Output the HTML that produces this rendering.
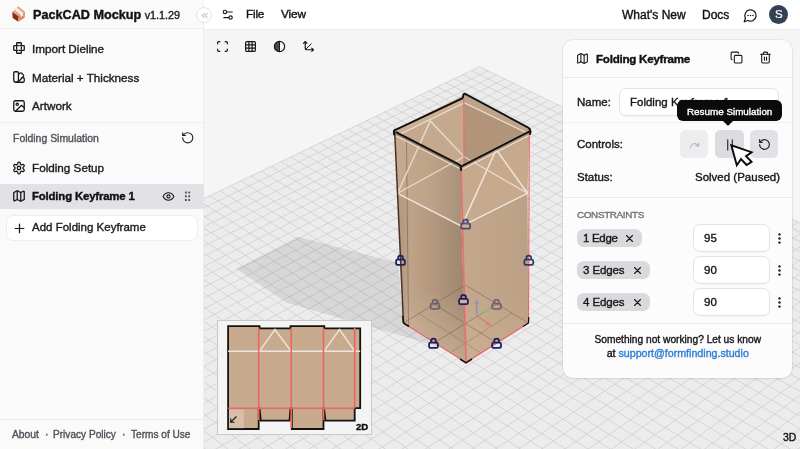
<!DOCTYPE html>
<html lang="en">
<head>
<meta charset="utf-8">
<title>PackCAD Mockup</title>
<style>
*{box-sizing:border-box;margin:0;padding:0}
html,body{width:800px;height:449px;overflow:hidden;background:#fff}
body{font-family:"Liberation Sans",Arial,sans-serif;color:#18181b;position:relative;-webkit-font-smoothing:antialiased}
.abs{position:absolute}
.scene{position:absolute;left:0;top:0}
.t{position:absolute;white-space:nowrap;line-height:1;will-change:transform;-webkit-text-stroke:0.38px currentColor}
svg{display:block;overflow:visible}
.ico{position:absolute;fill:none;stroke:#18181b;stroke-width:2;stroke-linecap:round;stroke-linejoin:round}
/* top bar */
#topbar{left:204px;top:0;width:596px;height:29.9px;background:#fff;border-bottom:1.9px solid #ebebed}
/* sidebar */
#side{left:0;top:0;width:204px;height:449px;background:#fafafa;border-right:1px solid #eeeef0}
#side .sep{position:absolute;left:0;width:203px;height:1px;background:#e7e7ea}
#sel{left:0;top:183.5px;width:204px;height:25px;background:#e2e2e6}
#addbtn{left:5.5px;top:214.7px;width:192px;height:26.8px;background:#fff;border:1px solid #ededf0;border-radius:7px}
.nav{font-size:11.7px;color:#1c1c1f}
/* panel */
#panel{left:563px;top:39.5px;width:228.5px;height:338.3px;background:#fcfcfc;border-radius:10px;box-shadow:0 0 0 1px rgba(0,0,0,.05),0 1px 3px rgba(0,0,0,.06)}
#panel .sep{position:absolute;left:0;width:228.5px;height:1px;background:#e9e9ec}
.inp{position:absolute;background:#fff;border:1px solid #e4e4e7;border-radius:7px;box-shadow:0 1px 1px rgba(0,0,0,.03)}
.cbtn{position:absolute;width:28.3px;height:28.3px;border-radius:5.5px;background:#e2e2e6}
.chip{position:absolute;height:18.2px;border-radius:6.5px;background:#dadade}
.p{font-size:11.5px;color:#18181b}
</style>
</head>
<body>
<svg class="scene" width="800" height="449" viewBox="0 0 800 449">
<defs><clipPath id="vp"><rect x="204" y="28" width="596" height="421"/></clipPath></defs>
<g clip-path="url(#vp)">
<rect x="204" y="28" width="596" height="421" fill="#f5f5f5"/>
<polygon points="489.2,731.4 1003.6,322.3 479.6,66.6 -33.0,311.9" fill="#ececed"/>
<path d="M489.2,731.4L-33.0,311.9M502.7,720.7L-20.3,305.8M516.0,710.1L-7.8,299.8M529.2,699.6L4.7,293.9M542.2,689.2L17.0,288.0M555.0,679.0L29.2,282.2M567.7,668.9L41.2,276.4M580.3,659.0L53.2,270.7M592.6,649.1L65.1,265.0M604.9,639.4L76.8,259.4M616.9,629.8L88.4,253.8M628.9,620.3L100.0,248.3M640.7,611.0L111.4,242.8M652.3,601.7L122.7,237.4M663.8,592.5L133.9,232.0M675.2,583.5L145.0,226.7M686.4,574.6L156.0,221.5M697.6,565.7L167.0,216.2M708.5,557.0L177.8,211.1M719.4,548.3L188.5,205.9M730.1,539.8L199.1,200.8M740.7,531.4L209.7,195.8M751.2,523.0L220.1,190.8M761.6,514.8L230.5,185.8M771.9,506.6L240.7,180.9M782.0,498.5L250.9,176.0M792.1,490.6L261.0,171.2M802.0,482.7L271.0,166.4M811.8,474.9L280.9,161.7M821.5,467.1L290.8,157.0M831.1,459.5L300.5,152.3M840.6,451.9L310.2,147.7M850.0,444.5L319.8,143.1M859.3,437.1L329.3,138.5M868.5,429.7L338.7,134.0M877.7,422.5L348.1,129.6M886.7,415.3L357.3,125.1M895.6,408.2L366.5,120.7M904.4,401.2L375.6,116.4M913.1,394.3L384.7,112.0M921.8,387.4L393.7,107.7M930.4,380.6L402.6,103.5M938.8,373.9L411.4,99.2M947.2,367.2L420.2,95.0M955.5,360.6L428.9,90.9M963.7,354.1L437.5,86.8M971.9,347.6L446.0,82.7M979.9,341.2L454.5,78.6M987.9,334.8L463.0,74.6M995.8,328.6L471.3,70.6M1003.6,322.3L479.6,66.6M-33.0,311.9L479.6,66.6M-25.1,318.2L488.0,70.7M-17.1,324.6L496.5,74.8M-9.1,331.1L505.0,79.0M-1.0,337.6L513.6,83.2M7.2,344.2L522.3,87.5M15.5,350.9L531.1,91.7M23.9,357.6L539.9,96.0M32.3,364.4L548.8,100.4M40.9,371.2L557.8,104.8M49.5,378.2L566.8,109.2M58.3,385.2L576.0,113.6M67.1,392.3L585.2,118.1M76.0,399.4L594.5,122.7M85.0,406.7L603.8,127.2M94.1,414.0L613.3,131.8M103.3,421.4L622.8,136.5M112.6,428.9L632.4,141.2M122.0,436.4L642.1,145.9M131.5,444.1L651.9,150.7M141.2,451.8L661.7,155.5M150.9,459.6L671.7,160.3M160.7,467.5L681.7,165.2M170.7,475.5L691.8,170.2M180.7,483.6L702.0,175.2M190.9,491.8L712.3,180.2M201.2,500.0L722.7,185.3M211.6,508.4L733.2,190.4M222.1,516.9L743.8,195.5M232.8,525.4L754.5,200.7M243.6,534.1L765.3,206.0M254.5,542.8L776.2,211.3M265.5,551.7L787.1,216.7M276.7,560.7L798.2,222.1M288.0,569.7L809.4,227.5M299.4,578.9L820.7,233.0M311.0,588.2L832.1,238.6M322.7,597.6L843.6,244.2M334.5,607.2L855.2,249.9M346.6,616.8L866.9,255.6M358.7,626.6L878.7,261.4M371.0,636.5L890.7,267.2M383.5,646.5L902.8,273.1M396.1,656.6L914.9,279.0M408.9,666.9L927.2,285.0M421.8,677.3L939.7,291.1M435.0,687.9L952.2,297.2M448.2,698.5L964.9,303.4M461.7,709.3L977.7,309.7M475.4,720.3L990.6,316.0M489.2,731.4L1003.6,322.3" stroke="#cbcbcf" stroke-width="0.7" fill="none"/>
<polygon points="404.0,323.0 398.0,263.0 298.4,236.7 236.0,268.8 286.0,302.6 440.0,347.0" fill="#000" fill-opacity="0.085"/>
<defs><linearGradient id="gl" x1="403" y1="0" x2="464" y2="0" gradientUnits="userSpaceOnUse"><stop offset="0" stop-color="#b69b81"/><stop offset="0.12" stop-color="#bea389"/><stop offset="0.5" stop-color="#b3987e"/><stop offset="1" stop-color="#9e8670"/></linearGradient><linearGradient id="gr" x1="464" y1="0" x2="529" y2="0" gradientUnits="userSpaceOnUse"><stop offset="0" stop-color="#c4a88c"/><stop offset="1" stop-color="#bca085"/></linearGradient><linearGradient id="glu" x1="395" y1="0" x2="462" y2="0" gradientUnits="userSpaceOnUse"><stop offset="0" stop-color="#c6ab90"/><stop offset="0.55" stop-color="#bda288"/><stop offset="1" stop-color="#a9917a"/></linearGradient><linearGradient id="gv" x1="0" y1="290" x2="0" y2="360" gradientUnits="userSpaceOnUse"><stop offset="0" stop-color="#d8bfa4" stop-opacity="0"/><stop offset="1" stop-color="#d8bfa4" stop-opacity="0.6"/></linearGradient></defs>
<polygon points="394.6,130.0 464.1,95.0 464.0,166.0 461.0,165.5" fill="#c5a98e" />
<polygon points="464.1,95.0 529.3,130.0 461.0,165.5 464.0,166.0" fill="#b1947a" />
<polygon points="394.6,130.0 461.0,165.5 461.6,226.1 397.5,193.3" fill="url(#glu)" />
<polygon points="461.0,165.5 529.3,130.0 527.5,193.3 461.6,226.1" fill="#c7aa8e" />
<polygon points="397.5,193.3 461.6,226.1 466.0,362.5 403.5,323.0" fill="url(#gl)" />
<polygon points="461.6,226.1 527.5,193.3 528.5,323.0 466.0,362.5" fill="url(#gr)" />
<polygon points="397.5,193.3 461.6,226.1 466.0,362.5 403.5,323.0" fill="url(#gv)" />
<polygon points="461.6,226.1 527.5,193.3 528.5,323.0 466.0,362.5" fill="url(#gv)" opacity="0.5"/>
<polyline points="403.5,323.0 465.5,285.0 528.5,323.0" fill="none" stroke="#6e5a49" stroke-width="0.8" opacity="0.6"/>
<polyline points="434.0,304.0 497.0,343.0" fill="none" stroke="#5f4e40" stroke-width="0.8" opacity="0.55"/>
<polyline points="497.0,304.0 434.0,343.0" fill="none" stroke="#5f4e40" stroke-width="0.8" opacity="0.55"/>
<polyline points="418.0,313.0 481.0,353.0" fill="none" stroke="#5f4e40" stroke-width="0.7" opacity="0.4"/>
<polyline points="512.0,313.0 450.0,353.0" fill="none" stroke="#5f4e40" stroke-width="0.7" opacity="0.4"/>
<polyline points="406.5,140.0 408.5,325.0" fill="none" stroke="#7d6856" stroke-width="0.9" opacity="0.75"/>
<polyline points="397.5,193.3 464.0,156.6 527.5,193.3" fill="none" stroke="#f0e8e1" stroke-width="1.2" opacity="0.8"/>
<polyline points="397.5,193.3 430.3,121.0 464.0,156.6" fill="none" stroke="#f0e8e1" stroke-width="1.3" opacity="0.85"/>
<polyline points="397.5,193.3 461.6,226.1 527.5,193.3" fill="none" stroke="#f0e8e1" stroke-width="1.5" opacity="0.95"/>
<polyline points="461.6,226.1 496.2,149.5 527.5,193.3" fill="none" stroke="#f0e8e1" stroke-width="1.5" opacity="0.95"/>
<polyline points="396.5,133.8 459.5,166.3" fill="none" stroke="#8c735f" stroke-width="2.2" opacity="0.8"/>
<polyline points="462.5,167.0 529.3,133.3" fill="none" stroke="#a98e76" stroke-width="2" opacity="0.7"/>
<polyline points="396.5,136.0 459.5,168.6" fill="none" stroke="#f0e8e1" stroke-width="1.1" opacity="0.85"/>
<polyline points="463.0,169.0 529.0,135.6" fill="none" stroke="#f0e8e1" stroke-width="1.1" opacity="0.85"/>
<polygon points="463.6,94.5 529.3,129.5 527.5,133.6 463.4,102.5" fill="#bea389" />
<polygon points="396.0,130.0 463.0,98.5 463.0,103.5 400.0,134.2" fill="#cab095" />
<polyline points="400.5,134.0 463.0,103.5" fill="none" stroke="#f0e8e1" stroke-width="1.2" opacity="0.85"/>
<polyline points="463.6,102.5 526.5,132.8" fill="none" stroke="#f0e8e1" stroke-width="1.2" opacity="0.9"/>
<polyline points="463.8,99.0 464.0,166.0" fill="none" stroke="#ea6666" stroke-width="1" />
<polyline points="461.0,165.5 466.0,362.5" fill="none" stroke="#e87070" stroke-width="1.7" />
<polyline points="529.3,130.0 528.5,323.0" fill="none" stroke="#ea6666" stroke-width="1.1" />
<polyline points="403.5,323.0 466.0,362.5 528.5,323.0" fill="none" stroke="#ea6666" stroke-width="1.2" />
<polyline points="394.6,130.0 403.5,323.0" fill="none" stroke="#4a322b" stroke-width="1.5" />
<path d="M394.2,134.5C393.4,131 394.2,129.6 396,129.6L462.3,98.3C463.2,97.6 463.2,96 463.4,94.6C463.8,93.4 465,93.6 466,94.4L528.2,127.6C530.6,128.8 530.9,131 530,134" fill="none" stroke="#141210" stroke-width="2" stroke-linejoin="round" stroke-linecap="round"/>
<path d="M396.5,132.3L458.8,164.4C460.6,165.2 461.2,166.6 461,170M461.8,166.2L529.6,131.4" fill="none" stroke="#141210" stroke-width="2" stroke-linejoin="round" stroke-linecap="round"/>
<polyline points="402.6,316.0 403.5,323.0 409.0,326.5" fill="none" stroke="#141210" stroke-width="1.5" />
<polyline points="460.0,359.0 466.0,362.8 472.0,359.0" fill="none" stroke="#141210" stroke-width="1.5" />
<polyline points="523.0,326.5 528.5,323.0 528.8,317.0" fill="none" stroke="#141210" stroke-width="1.2" />
<g opacity="0.62" transform="translate(0.6,1.3)"><line x1="476" y1="314" x2="476" y2="301" stroke="#7a80d4" stroke-width="1.6"/><path d="M473.6,302.8L476,297.8L478.4,302.8Z" fill="#7a80d4"/>
<line x1="476.5" y1="313.5" x2="489" y2="307" stroke="#7ccf76" stroke-width="2"/>
<line x1="476.5" y1="315" x2="488.5" y2="322.8" stroke="#f06060" stroke-width="1.3"/><path d="M486.8,320.2L491.3,324.8L485.5,324Z" fill="#f06060"/></g>
<g transform="translate(465.6,223.8)" opacity="0.75" fill="none" stroke="#2a2f6a" stroke-width="1.8"><path d="M-2.4,-0.3V-1.9a2.4,2.4 0 0 1 4.8,0V-0.3"/><rect x="-4.4" y="-0.3" width="8.8" height="5.2" rx="1.3" fill="#cbb096"/></g>
<g transform="translate(400.5,260.0)" opacity="1.00" fill="none" stroke="#1c2260" stroke-width="1.8"><path d="M-2.4,-0.3V-1.9a2.4,2.4 0 0 1 4.8,0V-0.3"/><rect x="-4.4" y="-0.3" width="8.8" height="5.2" rx="1.3" fill="none"/></g>
<g transform="translate(528.8,260.0)" opacity="0.85" fill="none" stroke="#1c2260" stroke-width="1.8"><path d="M-2.4,-0.3V-1.9a2.4,2.4 0 0 1 4.8,0V-0.3"/><rect x="-4.4" y="-0.3" width="8.8" height="5.2" rx="1.3" fill="none"/></g>
<g transform="translate(435.0,304.0)" opacity="0.55" fill="none" stroke="#34395f" stroke-width="1.8"><path d="M-2.4,-0.3V-1.9a2.4,2.4 0 0 1 4.8,0V-0.3"/><rect x="-4.4" y="-0.3" width="8.8" height="5.2" rx="1.3" fill="none"/></g>
<g transform="translate(463.5,299.2)" opacity="1.00" fill="none" stroke="#1c2260" stroke-width="1.8"><path d="M-2.4,-0.3V-1.9a2.4,2.4 0 0 1 4.8,0V-0.3"/><rect x="-4.4" y="-0.3" width="8.8" height="5.2" rx="1.3" fill="#cdb39a"/></g>
<g transform="translate(496.6,304.0)" opacity="0.55" fill="none" stroke="#34395f" stroke-width="1.8"><path d="M-2.4,-0.3V-1.9a2.4,2.4 0 0 1 4.8,0V-0.3"/><rect x="-4.4" y="-0.3" width="8.8" height="5.2" rx="1.3" fill="none"/></g>
<g transform="translate(433.5,343.0)" opacity="1.00" fill="none" stroke="#1c2260" stroke-width="1.8"><path d="M-2.4,-0.3V-1.9a2.4,2.4 0 0 1 4.8,0V-0.3"/><rect x="-4.4" y="-0.3" width="8.8" height="5.2" rx="1.3" fill="none"/></g>
<g transform="translate(496.6,343.0)" opacity="1.00" fill="none" stroke="#1c2260" stroke-width="1.8"><path d="M-2.4,-0.3V-1.9a2.4,2.4 0 0 1 4.8,0V-0.3"/><rect x="-4.4" y="-0.3" width="8.8" height="5.2" rx="1.3" fill="none"/></g>
</g></svg>

<!-- ============ SIDEBAR ============ -->
<div id="side" class="abs">
  <div class="sep" style="top:27.7px;background:#eeeef0"></div>
  <div class="sep" style="top:121.5px;background:#eeeef0"></div>
  <div class="sep" style="top:419px;background:#e9e9ec"></div>
  <div id="sel" class="abs"></div>
  <div id="addbtn" class="abs"></div>

  <!-- logo -->
  <svg class="abs" style="left:0;top:0" width="30" height="28" viewBox="0 0 30 28">
    <path d="M18.3 6.3 L25 11.7 L18.8 16.4 L12.3 12Z" fill="#e9a27c"/>
    <path d="M12.3 12 L18.8 16.4 L18.3 21.7 L12.7 18Z" fill="#8a2c1a"/>
    <path d="M18.8 16.4 L25 11.7 L24.7 17.7 L18.3 21.7Z" fill="#e08a60"/>
    <path d="M14.6 9.9 L16.9 7.7 L23.2 13 L23.1 15.4 L20.7 17.2 L20.8 14.8Z" fill="#f3efee"/>
  </svg>
  <div class="t" style="left:33px;top:8.5px;font-size:12.65px;font-weight:bold;color:#111">PackCAD Mockup <span style="font-weight:normal;font-size:10.8px;color:#222">v1.1.29</span></div>

  <!-- Import Dieline icon -->
  <svg class="ico" style="left:11.5px;top:41px;stroke-width:2.2" width="14" height="14" viewBox="0 0 24 24"><path d="M9 3h6a1 1 0 0 1 1 1v4h4a1 1 0 0 1 1 1v6a1 1 0 0 1-1 1h-4v4a1 1 0 0 1-1 1H9a1 1 0 0 1-1-1v-4H4a1 1 0 0 1-1-1V9a1 1 0 0 1 1-1h4V4a1 1 0 0 1 1-1z"/><path d="M8 8h8v8H8z" stroke-dasharray="3 2.4"/></svg>
  <div class="t nav" style="left:31.5px;top:42.5px">Import Dieline</div>

  <svg class="ico" style="left:11.5px;top:70px;stroke-width:2.2" width="14" height="14" viewBox="0 0 24 24"><path d="M11 17a4 4 0 0 1-8 0V5a2 2 0 0 1 2-2h4a2 2 0 0 1 2 2Z"/><path d="M16.7 13H19a2 2 0 0 1 2 2v4a2 2 0 0 1-2 2H7"/><path d="m11 8 2.3-2.3a2.4 2.4 0 0 1 3.4 0l2.6 2.6a2.4 2.4 0 0 1 0 3.4L11.6 19.4"/></svg>
  <div class="t nav" style="left:31.5px;top:71.7px">Material + Thickness</div>

  <svg class="ico" style="left:11.5px;top:98.7px;stroke-width:2.2" width="14" height="14" viewBox="0 0 24 24"><rect x="3" y="3" width="18" height="18" rx="3"/><circle cx="9" cy="9" r="2"/><path d="m21 15-3.1-3.1a2 2 0 0 0-2.8 0L6 21"/></svg>
  <div class="t nav" style="left:31.5px;top:100.2px">Artwork</div>

  <div class="t" style="left:12.5px;top:133.5px;font-size:10.45px;color:#52525b">Folding Simulation</div>
  <svg class="ico" style="left:180.5px;top:131px;stroke:#27272a;stroke-width:2" width="13.5" height="13.5" viewBox="0 0 24 24"><path d="M3 12a9 9 0 1 0 9-9 9.75 9.75 0 0 0-6.74 2.74L3 8"/><path d="M3 3v5h5"/></svg>

  <svg class="ico" style="left:11.5px;top:160.5px;stroke-width:2.2" width="14" height="14" viewBox="0 0 24 24"><path d="M12.22 2h-.44a2 2 0 0 0-2 2v.18a2 2 0 0 1-1 1.73l-.43.25a2 2 0 0 1-2 0l-.15-.08a2 2 0 0 0-2.73.73l-.22.38a2 2 0 0 0 .73 2.73l.15.1a2 2 0 0 1 1 1.72v.51a2 2 0 0 1-1 1.74l-.15.09a2 2 0 0 0-.73 2.73l.22.38a2 2 0 0 0 2.73.73l.15-.08a2 2 0 0 1 2 0l.43.25a2 2 0 0 1 1 1.73V20a2 2 0 0 0 2 2h.44a2 2 0 0 0 2-2v-.18a2 2 0 0 1 1-1.73l.43-.25a2 2 0 0 1 2 0l.15.08a2 2 0 0 0 2.73-.73l.22-.39a2 2 0 0 0-.73-2.73l-.15-.08a2 2 0 0 1-1-1.74v-.5a2 2 0 0 1 1-1.74l.15-.09a2 2 0 0 0 .73-2.73l-.22-.38a2 2 0 0 0-2.73-.73l-.15.08a2 2 0 0 1-2 0l-.43-.25a2 2 0 0 1-1-1.73V4a2 2 0 0 0-2-2z"/><circle cx="12" cy="12" r="3"/></svg>
  <div class="t nav" style="left:31.5px;top:162px">Folding Setup</div>

  <svg class="ico" style="left:11.5px;top:189px;stroke-width:2.2" width="14" height="14" viewBox="0 0 24 24"><path d="M14.1 5.6a2 2 0 0 0 1.8 0l3.7-1.8A1 1 0 0 1 21 4.6v12.8a1 1 0 0 1-.6.9l-4.5 2.3a2 2 0 0 1-1.8 0l-4.2-2.1a2 2 0 0 0-1.8 0l-3.7 1.8A1 1 0 0 1 3 19.4V6.6a1 1 0 0 1 .6-.9l4.5-2.3a2 2 0 0 1 1.8 0z"/><path d="M15 5.8v15"/><path d="M9 3.2v15"/></svg>
  <div class="t nav" style="left:31.5px;top:190.7px;font-weight:bold;font-size:11.4px;letter-spacing:-0.17px;color:#111">Folding Keyframe 1</div>
  <svg class="ico" style="left:162px;top:190px;stroke-width:2" width="13" height="13" viewBox="0 0 24 24"><path d="M2 12s3.5-7 10-7 10 7 10 7-3.5 7-10 7-10-7-10-7z"/><circle cx="12" cy="12" r="3"/></svg>
  <svg class="abs" style="left:184px;top:191px" width="8" height="11" viewBox="0 0 8 11" fill="#505058"><rect x="0.95" y="0.55" width="1.9" height="1.9" rx="0.5"/><rect x="4.25" y="0.55" width="1.9" height="1.9" rx="0.5"/><rect x="0.95" y="4.30" width="1.9" height="1.9" rx="0.5"/><rect x="4.25" y="4.30" width="1.9" height="1.9" rx="0.5"/><rect x="0.95" y="8.05" width="1.9" height="1.9" rx="0.5"/><rect x="4.25" y="8.05" width="1.9" height="1.9" rx="0.5"/></svg>

  <svg class="ico" style="left:12.5px;top:221.5px;stroke-width:2.3" width="13" height="13" viewBox="0 0 24 24"><path d="M4 12h16M12 4v16"/></svg>
  <div class="t nav" style="left:31.7px;top:222.3px;font-size:11.5px">Add Folding Keyframe</div>

  <div class="t" style="left:12px;top:429.7px;font-size:10.3px;color:#52525b">About</div>
  <div class="t" style="left:44.8px;top:429.7px;font-size:10.3px;color:#52525b">·</div>
  <div class="t" style="left:53px;top:429.7px;font-size:10.1px;color:#52525b">Privacy Policy</div>
  <div class="t" style="left:122.3px;top:429.7px;font-size:10.3px;color:#52525b">·</div>
  <div class="t" style="left:130.7px;top:429.7px;font-size:10.1px;color:#52525b">Terms of Use</div>
</div>

<!-- ============ TOP BAR ============ -->
<div id="topbar" class="abs">
  <svg class="ico" style="left:16.5px;top:8px;stroke-width:2" width="13.5" height="13.5" viewBox="0 0 24 24"><path d="M20 7h-9"/><path d="M14 17H5"/><circle cx="17" cy="17" r="3"/><circle cx="7" cy="7" r="3"/></svg>
  <div class="t" style="left:42px;top:9px;font-size:11.8px;letter-spacing:-0.2px;color:#111">File</div>
  <div class="t" style="left:76.5px;top:9px;font-size:11.8px;letter-spacing:-0.1px;color:#111">View</div>
  <div class="t" style="left:417.5px;top:9px;font-size:12px;color:#111">What's New</div>
  <div class="t" style="left:497.5px;top:9px;font-size:12px;color:#111">Docs</div>
  <svg class="ico" style="left:538.5px;top:7.5px;stroke-width:2" width="15" height="15" viewBox="0 0 24 24"><path d="M7.9 20A9 9 0 1 0 4 16.1L2 22Z"/><path d="M8 12h.01" stroke-width="2.6"/><path d="M12 12h.01" stroke-width="2.6"/><path d="M16 12h.01" stroke-width="2.6"/></svg>
  <div class="abs" style="left:565.3px;top:5px;width:19px;height:19px;border-radius:50%;background:#334155"></div>
  <div class="t" style="left:571.1px;top:9.2px;font-size:11.5px;color:#fff;-webkit-text-stroke:0.2px #fff">S</div>
</div>
<!-- collapse button -->
<div class="abs" style="left:196px;top:7px;width:16px;height:16px;border-radius:50%;background:#fff;border:1px solid #e4e4e7"></div>
<svg class="ico" style="left:200.5px;top:11.5px;stroke:#71717a;stroke-width:2.2" width="7" height="7" viewBox="0 0 24 24"><path d="m11 19-7-7 7-7"/><path d="m21 19-7-7 7-7"/></svg>

<!-- viewport toolbar -->
<svg class="ico" style="left:215.7px;top:40px;stroke-width:2.2" width="13" height="13" viewBox="0 0 24 24"><path d="M3 7V5a2 2 0 0 1 2-2h2"/><path d="M17 3h2a2 2 0 0 1 2 2v2"/><path d="M21 17v2a2 2 0 0 1-2 2h-2"/><path d="M7 21H5a2 2 0 0 1-2-2v-2"/></svg>
<svg class="ico" style="left:243.7px;top:40px;stroke-width:2.2" width="13" height="13" viewBox="0 0 24 24"><rect x="3" y="3" width="18" height="18" rx="2"/><path d="M3 9h18M3 15h18M9 3v18M15 3v18"/></svg>
<svg class="ico" style="left:272.7px;top:40px;stroke-width:2.2" width="13" height="13" viewBox="0 0 24 24"><circle cx="12" cy="12" r="9.5"/><path d="M12 2.5a9.5 9.5 0 0 0 0 19z" fill="#18181b" fill-opacity="0.78" stroke="none"/><path d="M12 2.5v19" stroke-width="1.8"/></svg>
<svg class="ico" style="left:301.7px;top:40px;stroke-width:2.2" width="13" height="13" viewBox="0 0 24 24"><path d="M6 3v12a3 3 0 0 0 3 3h12"/><path d="m3 6 3-3 3 3"/><path d="m18 15 3 3-3 3"/><path d="M7 17 17 7" stroke-width="1.8"/></svg>

<!-- 2D inset -->
<div class="abs" style="left:217px;top:320px;width:155px;height:115px;background:#f4f4f4;border:1px solid #c9c9cc"></div>
<svg class="abs" style="left:0;top:0" width="800" height="449" viewBox="0 0 800 449">
  <path d="M228.1 326.1H259.5V328.4H290.5V326.1H324.3V328.4H360.2V408.2H354.7V420.7H325.5L324 408.2H323.5V429H291.8V408.2H290.5L289.5 420.7H260.8L259.5 408.2H258.7V429H228.1Z" fill="#c8ab8f" stroke="#141210" stroke-width="1.8" stroke-linejoin="miter"/>
  <path d="M228.1 351.2H360.2" stroke="#eee6df" stroke-width="1.4" fill="none"/>
  <path d="M259.5 351.2L275 329.5L291 351.2M324 351.2L339.5 329.5L354.7 351.2" stroke="#eee6df" stroke-width="1.4" fill="none"/>
  <path d="M258.7 328V420M291.2 328V428M323.5 328V420M354.7 328V408.2M228.1 408.2H354.7" stroke="#ee6464" stroke-width="1.6" fill="none"/>
  <rect x="228.8" y="409.5" width="15" height="19" fill="#fff" fill-opacity="0.25"/>
  <path d="M236.5 416.5L230.8 422.2M230.8 418.5V422.2H234.5" stroke="#111" stroke-width="1.1" fill="none"/>
</svg>
<div class="t" style="left:355.5px;top:421.5px;font-size:9.6px;font-weight:bold;color:#111">2D</div>
<div class="t" style="left:783px;top:433px;font-size:10.4px;color:#111">3D</div>

<!-- ============ PANEL ============ -->
<div id="panel" class="abs">
  <div class="sep" style="top:37px"></div>
  <div class="sep" style="top:82.5px;background:#f1f1f3"></div>
  <div class="sep" style="top:157px"></div>
  <div class="sep" style="top:283px"></div>

  <svg class="ico" style="left:13px;top:12.5px" width="13" height="13" viewBox="0 0 24 24"><path d="M14.1 5.6a2 2 0 0 0 1.8 0l3.7-1.8A1 1 0 0 1 21 4.6v12.8a1 1 0 0 1-.6.9l-4.5 2.3a2 2 0 0 1-1.8 0l-4.2-2.1a2 2 0 0 0-1.8 0l-3.7 1.8A1 1 0 0 1 3 19.4V6.6a1 1 0 0 1 .6-.9l4.5-2.3a2 2 0 0 1 1.8 0z"/><path d="M15 5.8v15"/><path d="M9 3.2v15"/></svg>
  <div class="t" style="left:33px;top:13.5px;font-size:11.6px;letter-spacing:-0.25px;font-weight:bold;color:#111">Folding Keyframe</div>
  <svg class="ico" style="left:166.5px;top:11.5px" width="13" height="13" viewBox="0 0 24 24"><rect x="8" y="8" width="14" height="14" rx="2"/><path d="M4 16c-1.1 0-2-.9-2-2V4c0-1.1.9-2 2-2h10c1.1 0 2 .9 2 2"/></svg>
  <svg class="ico" style="left:195.5px;top:11.5px" width="13" height="13" viewBox="0 0 24 24"><path d="M3 6h18"/><path d="M19 6v14c0 1-1 2-2 2H7c-1 0-2-1-2-2V6"/><path d="M8 6V4c0-1 1-2 2-2h4c1 0 2 1 2 2v2"/><path d="M10 11v6M14 11v6"/></svg>

  <div class="t p" style="left:13.5px;top:57px">Name:</div>
  <div class="inp" style="left:56.3px;top:48px;width:160px;height:28.5px"></div>
  <div class="t p" style="left:67px;top:57px">Folding Keyframe 1</div>

  <div class="t p" style="left:13.5px;top:99.7px">Controls:</div>
  <div class="cbtn" style="left:117.2px;top:90.5px;background:#ededf0"></div>
  <div class="cbtn" style="left:152.3px;top:90.5px;background:#dbdbe0"></div>
  <div class="cbtn" style="left:187.2px;top:90.5px"></div>
  <svg class="ico" style="left:126px;top:100px;stroke:#a1a1aa" width="11" height="11" viewBox="0 0 24 24"><path d="M21 7v6h-6"/><path d="M3 17a9 9 0 0 1 9-9 9 9 0 0 1 6 2.3l3 2.7"/></svg>
  <svg class="ico" style="left:160.7px;top:99.3px;stroke-width:2.6;stroke:#3a3a40" width="12" height="12" viewBox="0 0 24 24"><path d="M7.4 2v20M16.6 2v20"/></svg>
  <svg class="ico" style="left:194.7px;top:98.3px;stroke:#27272a;stroke-width:2.2" width="13" height="13" viewBox="0 0 24 24"><path d="M3 12a9 9 0 1 0 9-9 9.75 9.75 0 0 0-6.74 2.74L3 8"/><path d="M3 3v5h5"/></svg>

  <div class="t p" style="left:13.5px;top:132px">Status:</div>
  <div class="t p" style="left:131.7px;top:132px">Solved (Paused)</div>

  <div class="t" style="left:13.5px;top:170.3px;font-size:9.9px;color:#71717a;letter-spacing:-0.35px">CONSTRAINTS</div>

  <div class="chip" style="left:13.5px;top:189.7px;width:65.5px"></div>
  <div class="t p" style="left:19.5px;top:193.2px;letter-spacing:-0.3px">1 Edge</div>
  <svg class="ico" style="left:62.3px;top:194.3px;stroke-width:2.9" width="9" height="9" viewBox="0 0 24 24"><path d="M4 4l16 16M20 4L4 20"/></svg>
  <div class="inp" style="left:130px;top:184px;width:77px;height:28px"></div>
  <div class="t p" style="left:141px;top:193.2px">95</div>

  <div class="chip" style="left:13.5px;top:221.5px;width:73px"></div>
  <div class="t p" style="left:19.5px;top:225.2px;letter-spacing:-0.1px">3 Edges</div>
  <svg class="ico" style="left:70px;top:226.3px;stroke-width:2.9" width="9" height="9" viewBox="0 0 24 24"><path d="M4 4l16 16M20 4L4 20"/></svg>
  <div class="inp" style="left:130px;top:216px;width:77px;height:28px"></div>
  <div class="t p" style="left:141px;top:225.2px">90</div>

  <div class="chip" style="left:13.5px;top:253.5px;width:73px"></div>
  <div class="t p" style="left:19.5px;top:257.2px;letter-spacing:-0.1px">4 Edges</div>
  <svg class="ico" style="left:70px;top:258.3px;stroke-width:2.9" width="9" height="9" viewBox="0 0 24 24"><path d="M4 4l16 16M20 4L4 20"/></svg>
  <div class="inp" style="left:130px;top:248px;width:77px;height:28px"></div>
  <div class="t p" style="left:141px;top:257.2px">90</div>

  <svg class="abs" style="left:213.8px;top:193.6px" width="5" height="76" viewBox="0 0 5 76" fill="#18181b"><circle cx="2.5" cy="1.4" r="1.2"/><circle cx="2.5" cy="5.5" r="1.2"/><circle cx="2.5" cy="9.6" r="1.2"/><circle cx="2.5" cy="33.4" r="1.2"/><circle cx="2.5" cy="37.5" r="1.2"/><circle cx="2.5" cy="41.6" r="1.2"/><circle cx="2.5" cy="65.4" r="1.2"/><circle cx="2.5" cy="69.5" r="1.2"/><circle cx="2.5" cy="73.6" r="1.2"/></svg>

  <div class="t" style="left:0;width:229.5px;top:295px;font-size:10.2px;text-align:center;color:#18181b">Something not working? Let us know</div>
  <div class="t" style="left:0;width:229.5px;top:308px;font-size:10.65px;text-align:center;color:#18181b">at <span style="color:#2f7fd6">support@formfinding.studio</span></div>
</div>

<!-- tooltip -->
<div class="abs" style="left:677px;top:99.6px;width:104.5px;height:21.8px;border-radius:6px;background:#0b0b0c"></div>
<svg class="abs" style="left:723.3px;top:121px" width="10" height="5" viewBox="0 0 10 5"><path d="M0 0H10L5.7 4.3a1 1 0 0 1-1.4 0Z" fill="#0b0b0c"/></svg>
<div class="t" style="left:686.8px;top:106.6px;font-size:9.85px;color:#fff">Resume Simulation</div>

<!-- cursor -->
<svg class="abs" style="left:0;top:0" width="800" height="449" viewBox="0 0 800 449"><path d="M731.3 145.3L736.8 165.2L741 159L746.6 165L751.6 161.8L746 156.2L751.6 152.2Z" fill="#fff" stroke="#0a0a0a" stroke-width="1.9" stroke-linejoin="miter" stroke-miterlimit="6"/></svg>

</body>
</html>
